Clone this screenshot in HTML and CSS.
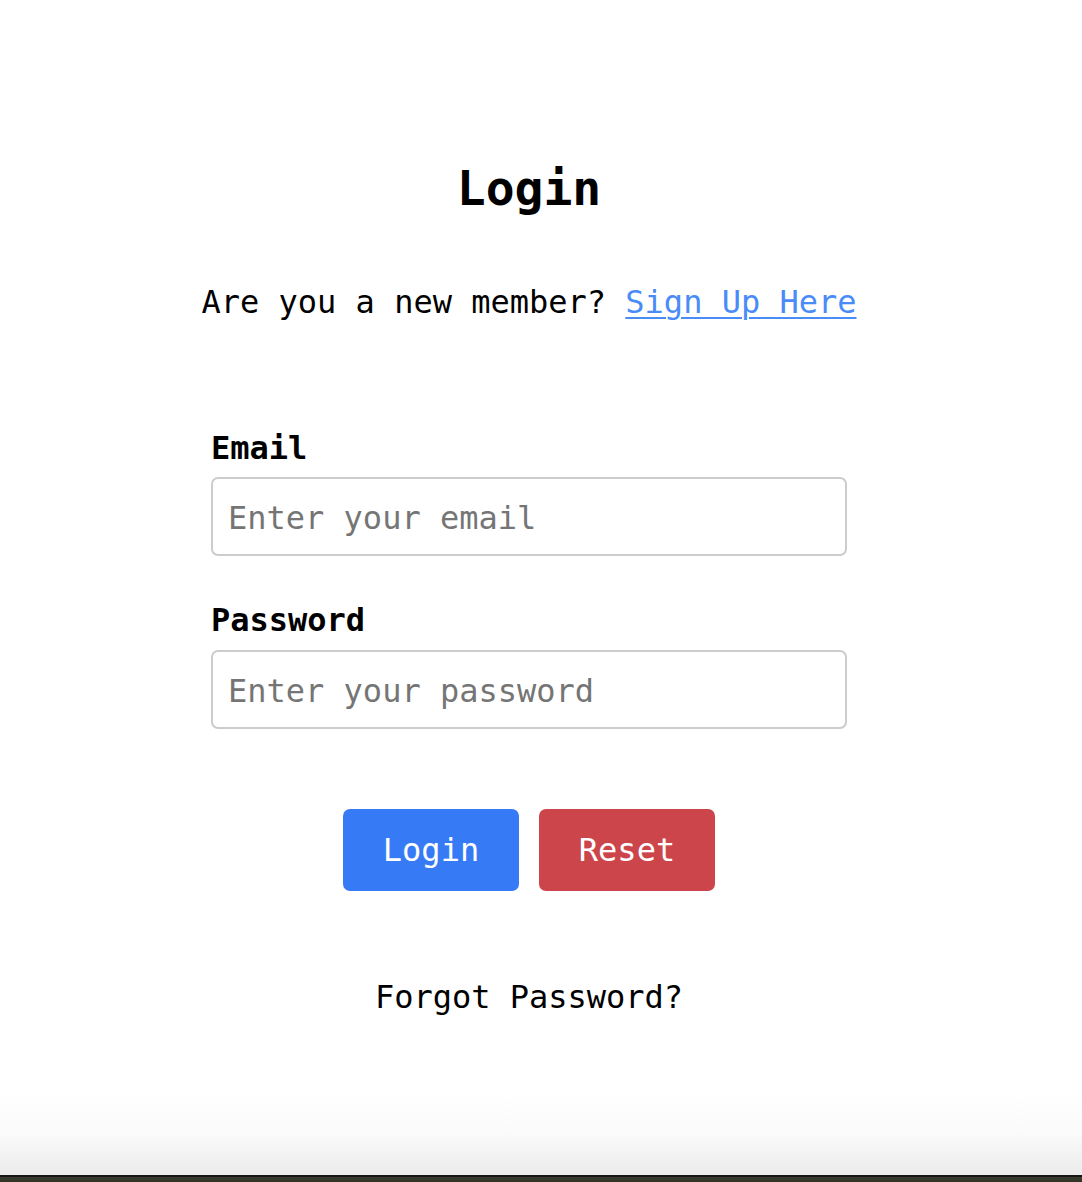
FILE: index.html
```html
<!DOCTYPE html>
<html lang="en">
<head>
<meta charset="utf-8">
<title>Login</title>
<link rel="stylesheet" href="styles.css">
</head>
<body>
<main class="page">
  <h1 class="title">Login</h1>
  <p class="subtitle">Are you a new member? <a class="link" href="#">Sign Up Here</a></p>
  <form class="form">
    <label class="label" for="email">Email</label>
    <input class="input" id="email" type="email" placeholder="Enter your email">
    <label class="label label-pw" for="password">Password</label>
    <input class="input" id="password" type="password" placeholder="Enter your password">
    <div class="actions">
      <button type="submit" class="btn btn-login">Login</button>
      <button type="reset" class="btn btn-reset">Reset</button>
    </div>
  </form>
  <p class="forgot">Forgot Password?</p>
</main>
</body>
</html>
```
FILE: styles.css
```css
html {
  height: 100%;
  background: linear-gradient(to bottom, #ffffff 0, #ffffff 1095px, #fafafa 1135px, #ebebeb 1175px, #151515 1175px, #151515 1177px, #3a3c30 1177px, #2f3326 1182px);
}
body {
  margin: 0;
  font-family: "DejaVu Sans Mono", "Liberation Mono", monospace;
  color: #000;
}
.page {
  width: 1058px;
  display: flex;
  flex-direction: column;
  align-items: center;
  padding-top: 160px;
}
.title {
  margin: 0;
  font-size: 48px;
  line-height: 56px;
  font-weight: bold;
}
.subtitle {
  margin: 66px 0 0;
  font-size: 32px;
  line-height: 40px;
}
.link {
  color: #4a8cf7;
  text-decoration: underline;
  text-underline-offset: 4px;
  text-decoration-thickness: 2px;
}
.form {
  width: 636px;
  margin-top: 106px;
  display: flex;
  flex-direction: column;
}
.label {
  font-size: 32px;
  line-height: 40px;
  font-weight: bold;
  margin-bottom: 9px;
}
.label-pw {
  margin-top: 44px;
  margin-bottom: 10px;
}
.input {
  box-sizing: border-box;
  width: 636px;
  height: 79px;
  border: 2px solid #cccccc;
  border-radius: 7px;
  padding: 2px 15px 0;
  font-family: inherit;
  font-size: 32px;
  color: #000;
  background: #fff;
  outline: none;
}
.input::placeholder {
  color: #757575;
}
.actions {
  display: flex;
  justify-content: center;
  gap: 20px;
  margin-top: 80px;
}
.btn {
  width: 176px;
  height: 82px;
  border: none;
  border-radius: 7px;
  color: #fff;
  font-family: inherit;
  font-size: 32px;
  padding: 0;
  cursor: pointer;
}
.btn-login {
  background: #377af6;
}
.btn-reset {
  background: #cc454b;
}
.forgot {
  margin: 86px 0 0;
  font-size: 32px;
  line-height: 40px;
}
```
